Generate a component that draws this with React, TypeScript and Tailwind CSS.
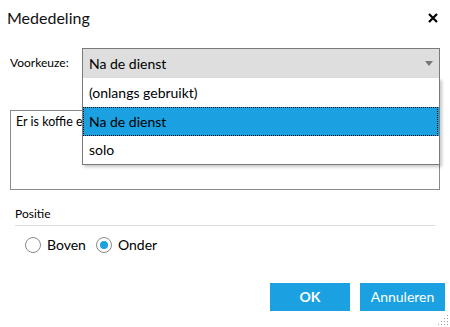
export default function App() {
  return (
    <div className="w-[450px] h-[327px] bg-white relative overflow-hidden text-black font-['Lato',sans-serif]">
      <div className="flex items-center justify-between h-[36px] pl-[7px] pr-[12px]">
        <span className="text-[16px] leading-none text-[#111]">Mededeling</span>
        <svg width="10" height="10" viewBox="0 0 10 10">
          <path d="M1 1 L9 9 M9 1 L1 9" stroke="#000" strokeWidth="2.2" />
        </svg>
      </div>

      <div className="flex items-center mt-[12px]">
        <span className="w-[82px] pl-[10px] text-[12px] leading-none">Voorkeuze:</span>
        <div className="relative flex-1 mr-[10px]">
          <div className="h-[30px] border-t border-x border-[#7a7a7a] bg-[#dedede] flex items-center justify-between pl-[6px] pr-[6px]">
            <span className="text-[14px] leading-none">Na de dienst</span>
            <svg width="8" height="5" viewBox="0 0 8 5">
              <path d="M0 0 L8 0 L4 5 Z" fill="#777" />
            </svg>
          </div>
          <div className="absolute left-0 right-0 top-[30px] z-10 bg-white border-x border-b border-[#7a7a7a] shadow-[2px_2px_3px_rgba(0,0,0,0.22)]">
            <div className="h-[29px] flex items-center pl-[6px] text-[14px] leading-none">(onlangs gebruikt)</div>
            <div className="h-[29px] bg-[#1ba1e2] flex">
              <div className="flex-1 mr-[1px] border border-dotted border-black flex items-center pl-[5px] text-[14px] leading-none">Na de dienst</div>
            </div>
            <div className="h-[28px] flex items-center pl-[6px] text-[14px] leading-none">solo</div>
          </div>
        </div>
      </div>

      <div className="mx-[10px] mt-[32px] h-[80px] border border-[#8a8a8a] px-[5px] pt-[3px] text-[12.5px] leading-[16px]">
        Er is koffie en thee
      </div>

      <div className="mx-[15px] mt-[16px] border-b border-[#dcdcdc] pb-[3px] text-[12px] leading-[16px]">Positie</div>

      <div className="flex items-center h-[20px] mt-[9px] pl-[25px] text-[14px] leading-none">
        <span className="w-[16px] h-[16px] rounded-full border border-[#8a8a8a] bg-white"></span>
        <span className="ml-[6px]">Boven</span>
        <span className="ml-[10px] w-[16px] h-[16px] rounded-full border border-[#8a8a8a] bg-white flex items-center justify-center">
          <span className="w-[8px] h-[8px] rounded-full bg-[#1ba1e2]"></span>
        </span>
        <span className="ml-[6px]">Onder</span>
      </div>

      <div className="flex justify-end gap-[10px] pr-[5px] mt-[28px]">
        <div className="w-[80px] h-[28px] bg-[#1ba1e2] text-white font-bold text-[14px] flex items-center justify-center leading-none">OK</div>
        <div className="w-[85px] h-[28px] bg-[#1ba1e2] text-white text-[14px] flex items-center justify-center leading-none">Annuleren</div>
      </div>

      <svg className="absolute right-[1px] bottom-[1px]" width="12" height="12" viewBox="0 0 12 12">
        {[
          [10, 1], [10, 4], [7, 4], [10, 7], [7, 7], [4, 7], [10, 10], [7, 10], [4, 10], [1, 10],
        ].map(([x, y], i) => (
          <rect key={i} x={x} y={y} width="1" height="1" fill="#9a9a9a" />
        ))}
      </svg>
    </div>
  );
}
